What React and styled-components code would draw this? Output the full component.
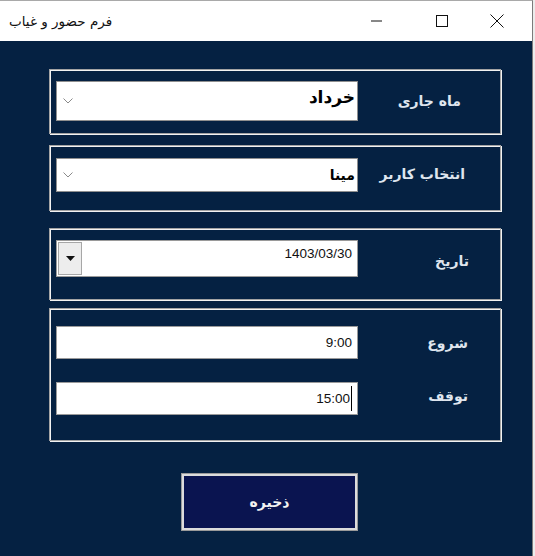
import React from "react";
import styled, { createGlobalStyle } from "styled-components";

const GlobalStyle = createGlobalStyle`
  html, body {
    margin: 0;
    padding: 0;
    background: #ececec;
  }
  * {
    box-sizing: border-box;
  }
`;

const Window = styled.div`
  width: 533px;
  height: 556px;
  border-top: 1px solid #a9a9a9;
  border-right: 1px solid #7b7b7b;
  background: #052142;
  display: flex;
  flex-direction: column;
  overflow: hidden;
`;

const TitleBar = styled.div`
  height: 40px;
  flex: none;
  background: #ffffff;
  display: flex;
  align-items: center;
  padding-left: 9px;
`;

const Title = styled.span`
  font-family: "DejaVu Sans", sans-serif;
  font-size: 13.5px;
  color: #111;
  direction: rtl;
`;

const Caption = styled.div`
  margin-left: auto;
  display: flex;
  align-items: center;
  height: 100%;
  padding-right: 7px;
`;

const CaptionButton = styled.div`
  width: ${(p) => p.$w}px;
  margin-left: ${(p) => p.$gap || 0}px;
  height: 100%;
  display: flex;
  align-items: center;
  justify-content: center;
  color: #111;
`;

const Content = styled.div`
  display: flex;
  flex-direction: column;
  padding: 0 31px 0 49px;
`;

const Group = styled.div`
  margin-top: ${(p) => p.$top}px;
  height: ${(p) => p.$h}px;
  flex: none;
  width: 452px;
  border: 1px solid #a3a3a3;
  box-shadow: inset 1px 1px 0 #f2f2f2, 1px 1px 0 #f2f2f2;
  padding: ${(p) => p.$pad};
  display: flex;
  flex-direction: column;
  gap: ${(p) => p.$gap || 0}px;
`;

const Row = styled.div`
  display: flex;
  align-items: center;
`;

const Label = styled.div`
  flex: 1;
  text-align: right;
  padding-right: ${(p) => p.$pr || 33}px;
  margin-top: ${(p) => p.$shift || 0}px;
  direction: rtl;
  font-family: "DejaVu Sans", sans-serif;
  font-weight: bold;
  font-size: 14px;
  color: #dfe5ee;
`;

const Combo = styled.div`
  width: 302px;
  height: ${(p) => p.$h}px;
  background: #fff;
  border: 1px solid #8f8f8f;
  display: flex;
  align-items: ${(p) => (p.$top ? "flex-start" : "center")};
  padding: 0 2px 0 6px;
`;

const Chevron = styled.svg`
  flex: none;
  align-self: center;
`;

const ComboText = styled.span`
  margin-left: auto;
  direction: rtl;
  font-family: "DejaVu Sans", sans-serif;
  font-weight: bold;
  font-size: ${(p) => p.$size}px;
  color: #000;
  padding-top: ${(p) => p.$pt || 0}px;
`;

const DateBox = styled.div`
  width: 302px;
  height: 37px;
  background: #fff;
  border: 1px solid #9a9a9a;
  display: flex;
  align-items: flex-start;
  padding: 1px 5px 0 1px;
`;

const DropButton = styled.div`
  width: 24px;
  height: 33px;
  background: #ededed;
  border: 1px solid #a7a7a7;
  display: flex;
  align-items: center;
  justify-content: center;
`;

const PlainText = styled.span`
  margin-left: auto;
  font-family: "Liberation Sans", sans-serif;
  font-size: 13.5px;
  color: #111;
  padding-top: ${(p) => p.$pt || 0}px;
`;

const TextBox = styled.div`
  width: 302px;
  height: 33px;
  background: #fff;
  border: 1px solid #9a9a9a;
  display: flex;
  align-items: center;
  justify-content: flex-end;
  padding-right: 5px;
`;

const Caret = styled.span`
  display: inline-block;
  width: 1px;
  height: 25px;
  background: #000;
  margin-left: 1px;
`;

const SaveButton = styled.button`
  margin: 32px 0 0 132px;
  width: 177px;
  height: 58px;
  background: #0a1450;
  border: 3px solid #dcdcdc;
  outline: 1px solid #9a9a9a;
  outline-offset: -1px;
  color: #f2f2f2;
  font-family: "DejaVu Sans", sans-serif;
  font-weight: bold;
  font-size: 14px;
  direction: rtl;
  padding: 0;
  cursor: pointer;
`;

const ChevronIcon = () => (
  <Chevron width="10" height="6" viewBox="0 0 10 6">
    <polyline points="0.5,0.5 5,5 9.5,0.5" fill="none" stroke="#8a8a8a" strokeWidth="1" />
  </Chevron>
);

export default function App() {
  return (
    <>
      <GlobalStyle />
      <Window>
        <TitleBar>
          <Title>فرم حضور و غیاب</Title>
          <Caption>
            <CaptionButton $w={56}>
              <svg width="11" height="2" viewBox="0 0 11 2">
                <line x1="0" y1="1" x2="11" y2="1" stroke="#111" strokeWidth="1" />
              </svg>
            </CaptionButton>
            <CaptionButton $w={55} $gap={10}>
              <svg width="12" height="12" viewBox="0 0 12 12">
                <rect x="0.5" y="0.5" width="11" height="11" fill="none" stroke="#111" strokeWidth="1" />
              </svg>
            </CaptionButton>
            <CaptionButton $w={56}>
              <svg width="14" height="14" viewBox="0 0 14 14">
                <path d="M0.5 0.5 L13.5 13.5 M13.5 0.5 L0.5 13.5" stroke="#111" strokeWidth="1" />
              </svg>
            </CaptionButton>
          </Caption>
        </TitleBar>

        <Content>
          <Group $top={28} $h={65} $pad="11px 0 0 6px">
            <Row>
              <Combo $h={40} $top>
                <ChevronIcon />
                <ComboText $size={17} $pt={5}>خرداد</ComboText>
              </Combo>
              <Label $pr={39}>ماه جاری</Label>
            </Row>
          </Group>

          <Group $top={11} $h={66} $pad="12px 0 0 6px">
            <Row>
              <Combo $h={34}>
                <ChevronIcon />
                <ComboText $size={14}>مینا</ComboText>
              </Combo>
              <Label $pr={35} $shift={-3}>انتخاب کاربر</Label>
            </Row>
          </Group>

          <Group $top={17} $h={72} $pad="11px 0 0 6px">
            <Row>
              <DateBox>
                <DropButton>
                  <svg width="9" height="5" viewBox="0 0 9 5">
                    <polygon points="0,0 9,0 4.5,5" fill="#111" />
                  </svg>
                </DropButton>
                <PlainText $pt={4}>1403/03/30</PlainText>
              </DateBox>
              <Label $pr={31} $shift={5}>تاریخ</Label>
            </Row>
          </Group>

          <Group $top={8} $h={133} $pad="17px 0 0 6px" $gap={23}>
            <Row>
              <TextBox>
                <PlainText>9:00</PlainText>
              </TextBox>
              <Label $pr={32}>شروع</Label>
            </Row>
            <Row>
              <TextBox>
                <PlainText>15:00</PlainText>
                <Caret />
              </TextBox>
              <Label $pr={32} $shift={-6}>توقف</Label>
            </Row>
          </Group>

          <SaveButton>ذخیره</SaveButton>
        </Content>
      </Window>
    </>
  );
}
